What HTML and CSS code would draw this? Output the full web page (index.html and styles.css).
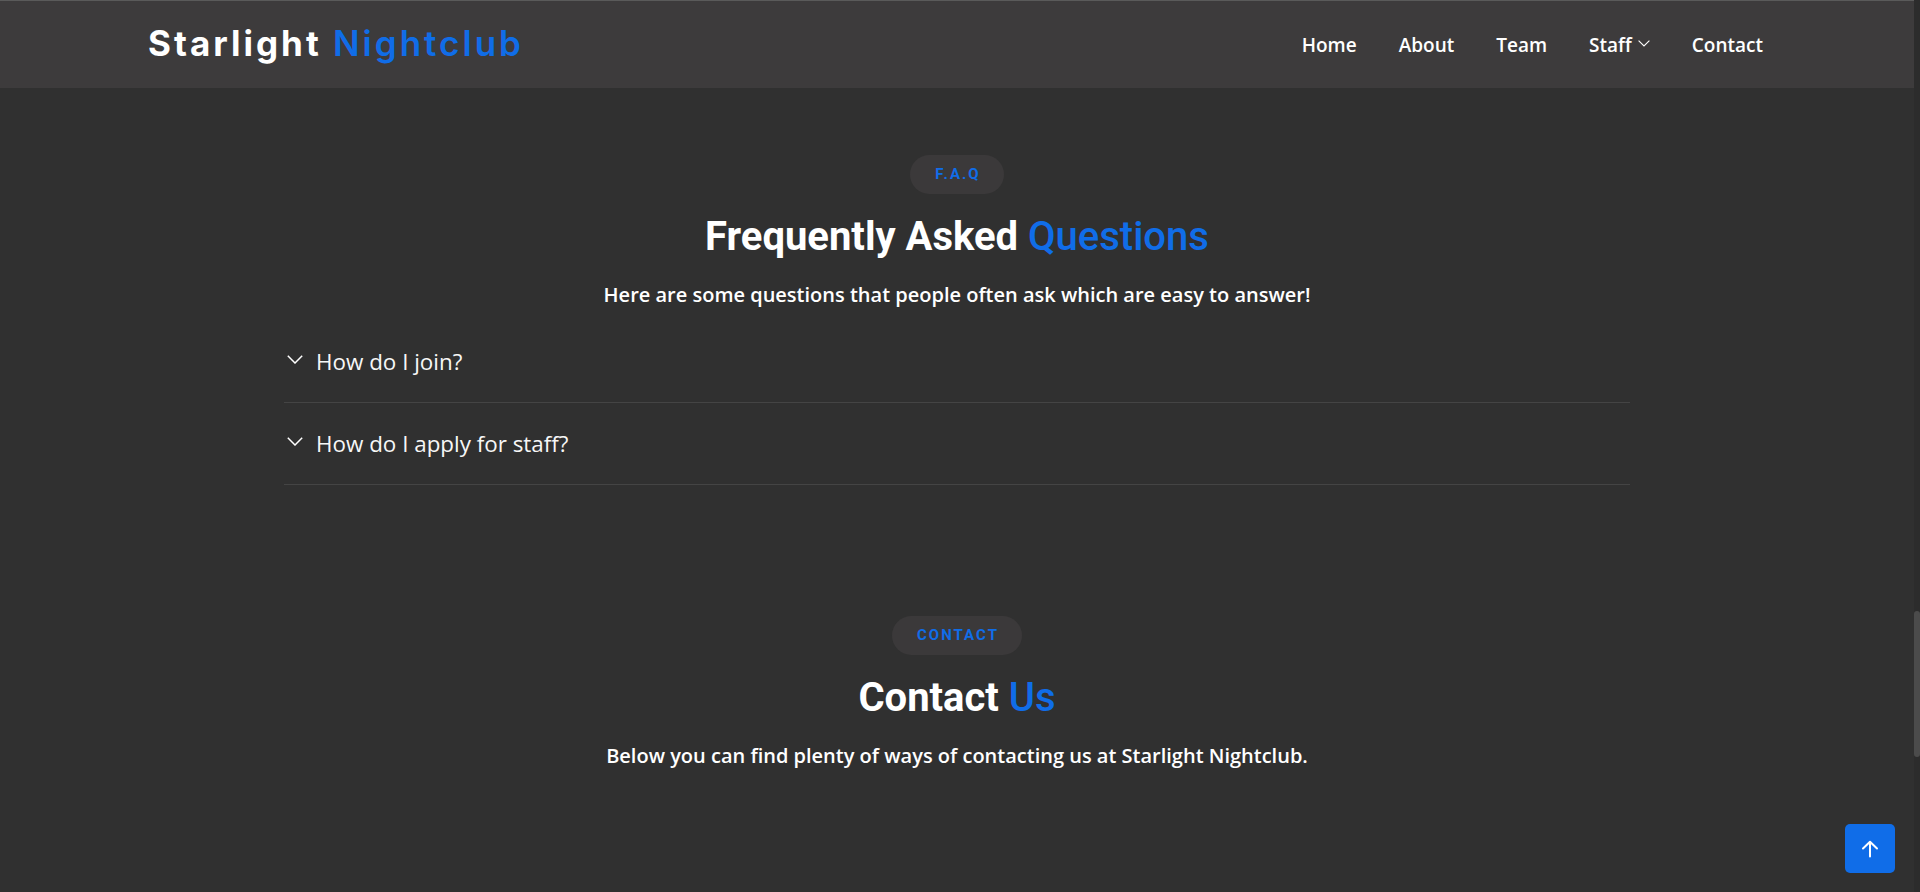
FILE: index.html
```html
<!DOCTYPE html>
<html lang="en">
<head>
<meta charset="utf-8">
<title>Starlight Nightclub</title>
<link rel="stylesheet" href="styles.css">
</head>
<body>
<div class="page">
  <header class="header">
    <div class="header-inner">
      <a class="logo" href="#">Starlight <span class="accent">Nightclub</span></a>
      <nav class="nav">
        <a href="#">Home</a>
        <a href="#">About</a>
        <a href="#">Team</a>
        <a href="#" class="dropdown">Staff <svg class="nav-chev" width="12" height="7" viewBox="0 0 12 7"><polyline points="0.6,0.6 6,6 11.4,0.6" fill="none" stroke="#ffffff" stroke-width="1.1"/></svg></a>
        <a href="#">Contact</a>
      </nav>
    </div>
  </header>

  <section class="section faq">
    <span class="badge">F.A.Q</span>
    <h2 class="title">Frequently Asked <span class="accent">Questions</span></h2>
    <p class="subtitle">Here are some questions that people often ask which are easy to answer!</p>
    <div class="accordion">
      <div class="item">
        <svg class="chev" width="16" height="9" viewBox="0 0 16 9"><polyline points="0.8,0.8 8,8 15.2,0.8" fill="none" stroke="#ffffff" stroke-width="1.5"/></svg>
        <span>How do I join?</span>
      </div>
      <div class="item">
        <svg class="chev" width="16" height="9" viewBox="0 0 16 9"><polyline points="0.8,0.8 8,8 15.2,0.8" fill="none" stroke="#ffffff" stroke-width="1.5"/></svg>
        <span>How do I apply for staff?</span>
      </div>
    </div>
  </section>

  <section class="section contact">
    <span class="badge">CONTACT</span>
    <h2 class="title">Contact <span class="accent">Us</span></h2>
    <p class="subtitle">Below you can find plenty of ways of contacting us at Starlight Nightclub.</p>
  </section>
</div>
<div class="scrollbar"><div class="thumb"></div></div>
<a class="to-top" href="#"><svg width="18" height="18" viewBox="0 0 18 18"><path d="M9 16.5V2M2 8.5L9 1.8l7 6.7" fill="none" stroke="#ffffff" stroke-width="2" stroke-linecap="round" stroke-linejoin="round"/></svg></a>
</body>
</html>
```

FILE: styles.css
```css
* { box-sizing: border-box; }
html, body { margin: 0; padding: 0; height: 100%; overflow: hidden; }
body {
  display: flex;
  background: #303030;
  color: #ffffff;
  font-family: "Open Sans", "Noto Sans", sans-serif;
}
a { color: inherit; text-decoration: none; }
.accent { color: #106de8; }

.page { flex: 1; min-width: 0; display: flex; flex-direction: column; }

.scrollbar { width: 6px; background: #2c2c2c; display: flex; flex-direction: column; }
.thumb { margin-top: 611px; height: 146px; background: #4b4b4b; border-radius: 3px; }

.header {
  height: 88px;
  background: #3d3b3c;
  border-top: 1px solid #5a5a5a;
}
.header-inner {
  height: 100%;
  display: flex;
  align-items: center;
  justify-content: space-between;
  padding: 0 151px 0 148px;
}
.logo {
  font-family: "Inter", "Lato", sans-serif;
  font-weight: 700;
  font-size: 35px;
  letter-spacing: 3px;
  color: #ffffff;
  margin-top: -3px;
}
.logo .accent { font-weight: 600; }
.nav { display: flex; align-items: center; gap: 42px; }
.nav a {
  font-family: "Open Sans", sans-serif;
  font-weight: 600;
  font-size: 19px;
  color: #ffffff;
  display: flex;
  align-items: center;
}
.nav-chev { margin-left: 6px; margin-bottom: 2px; }

.section { display: flex; flex-direction: column; align-items: center; }
.faq { padding-top: 67px; }
.contact { padding-top: 131px; }

.badge {
  display: inline-block;
  background: #3b393a;
  color: #106de8;
  font-family: "Roboto", sans-serif;
  font-weight: 700;
  font-size: 15px;
  letter-spacing: 2px;
  line-height: 19px;
  padding: 10px 23px 10px 25px;
  border-radius: 50px;
}
.title {
  margin: 19px 0 0;
  font-family: "Roboto", sans-serif;
  font-weight: 700;
  font-size: 40px;
  line-height: 48px;
}
.title .accent { font-weight: 500; }
.subtitle {
  margin: 20px 0 0;
  font-family: "Open Sans", sans-serif;
  font-weight: 600;
  font-size: 20px;
  line-height: 27px;
}

.accordion { width: 1346px; margin-top: 13px; }
.item {
  display: flex;
  align-items: center;
  padding: 26px 0 25px;
  border-bottom: 1px solid #444444;
  font-size: 22.4px;
  line-height: 30px;
  font-weight: 400;
  color: #f7f7f7;
}
.chev { margin: 0 13px 5px 3px; flex: none; }

.to-top {
  position: fixed;
  right: 25px;
  bottom: 19px;
  width: 50px;
  height: 49px;
  background: #106de8;
  border-radius: 5px;
  display: flex;
  align-items: center;
  justify-content: center;
}
```
